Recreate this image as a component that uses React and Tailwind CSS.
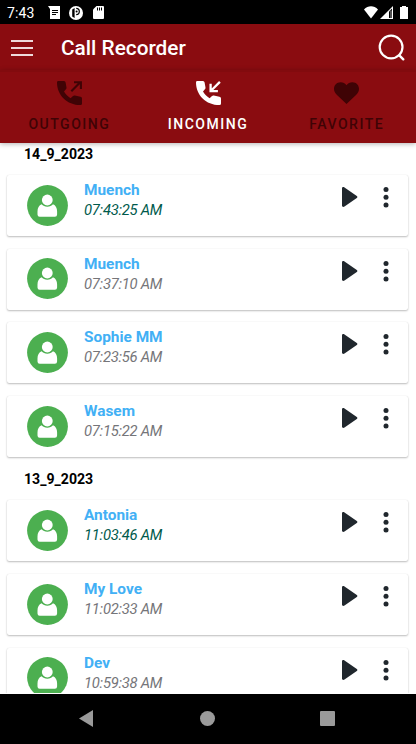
const groups = [
  {
    date: "14_9_2023",
    calls: [
      { name: "Muench", time: "07:43:25 AM", latest: true },
      { name: "Muench", time: "07:37:10 AM" },
      { name: "Sophie MM", time: "07:23:56 AM" },
      { name: "Wasem", time: "07:15:22 AM" },
    ],
  },
  {
    date: "13_9_2023",
    calls: [
      { name: "Antonia", time: "11:03:46 AM", latest: true },
      { name: "My Love", time: "11:02:33 AM" },
      { name: "Dev", time: "10:59:38 AM" },
    ],
  },
];

const HANDSET =
  "M1.3 0H7q1.3 0 1.6 1.5l.9 5q.2 1-.6 1.8L7 10.6c1.6 2.8 3.8 5 6.6 6.6l2.4-2.1q.8-.8 1.8-.6l5.6 1.3q1.6.3 1.6 1.7v5q0 1.5-1.5 1.5C10 24 0 14 0 1.4Q0 0 1.3 0z";

function StatusBar() {
  return (
    <div className="flex h-6 shrink-0 items-center bg-black text-white">
      <span className="ml-[7px] mt-[2px] w-[41px] text-[14px] leading-none tracking-[0.1px]">7:43</span>
      <svg className="mt-px h-[13px] w-[13px]" viewBox="0 0 13 13">
        <path fill="#fff" d="M0 0h12v13H2V3z" />
        <path stroke="#000" d="M4 4.5h6M4 6.5h6M4 8.5h4" />
      </svg>
      <svg className="ml-2 mt-px h-[14px] w-[14px]" viewBox="0 0 14 14">
        <circle cx="7" cy="7" r="7" fill="#fff" />
        <path fill="#000" d="M3.2 3.4 5.6 2v10L3.2 10.6z" />
        <path fill="none" stroke="#000" strokeWidth="1.2" d="M7.2 2.4a2.9 2.9 0 0 1 0 6.2" />
        <circle cx="7.6" cy="5.4" r="1" fill="#000" />
      </svg>
      <svg className="ml-[10px] mt-px h-[13px] w-[11px]" viewBox="0 0 11 13">
        <path fill="#fff" d="M3.5 0H10a1 1 0 0 1 1 1v11a1 1 0 0 1-1 1H1a1 1 0 0 1-1-1V3.5z" />
        <path stroke="#000" d="M4.5 1.5v3M6.5 1.5v3M8.5 1.5v3" />
      </svg>
      <svg className="ml-auto mt-px h-[13px] w-[14px]" viewBox="0 0 14 13">
        <path fill="#fff" d="M7 12.5 0 3.5C4-.9 10-.9 14 3.5z" />
      </svg>
      <svg className="ml-[2px] mt-px h-[13px] w-[13px]" viewBox="0 0 13 13">
        <path fill="#fff" d="M0 13 13 0v13z" />
        <path fill="#000" d="M9 5.5 12 2.5V12H9z" />
        <path fill="#aaa" d="M10.5 4.5h1V12h-1z" />
      </svg>
      <svg className="ml-[7px] mr-2 mt-px h-[13px] w-[8px]" viewBox="0 0 8 13">
        <path fill="#fff" d="M2 0h4v1h2v12H0V1h2z" />
      </svg>
    </div>
  );
}

function Toolbar() {
  return (
    <header className="flex h-[46px] shrink-0 items-center bg-[#8a0c10] text-white">
      <svg className="ml-[11px] mt-[2px] h-[18px] w-[22px]" viewBox="0 0 22 18">
        <path stroke="#fff" strokeOpacity=".85" strokeWidth="2" d="M0 2h22M0 9h22M0 16h22" />
      </svg>
      <h1 className="ml-7 mt-[3px] text-[20.8px] font-medium leading-none">Call Recorder</h1>
      <svg className="ml-auto mr-[11px] mt-px h-[27px] w-[27px]" viewBox="0 0 27 27" fill="none" stroke="#fff">
        <circle cx="13.1" cy="13" r="11.4" strokeWidth="2.2" />
        <path strokeWidth="2.4" strokeLinecap="round" d="m21.3 21.3 4 4" />
      </svg>
    </header>
  );
}

function Tab({ label, active, children }) {
  return (
    <button
      className={`flex flex-1 flex-col items-center ${active ? "text-white" : "text-[#3f0305]"}`}
    >
      <svg className="mt-[9px] h-[24px] w-[25px]" viewBox="0 0 25 24" fill="currentColor">
        {children}
      </svg>
      <span className="mt-[12px] text-[14px] font-medium leading-[14px] tracking-[1.5px]">{label}</span>
    </button>
  );
}

function Tabs() {
  return (
    <nav className="relative flex h-[73px] shrink-0 border-t-2 border-[#820b0e] bg-[#8a0c10] shadow-[0_1px_5px_rgba(0,0,0,0.3)]">
      <Tab label="OUTGOING">
        <path d={HANDSET} />
        <path fill="none" stroke="currentColor" strokeWidth="2.1" d="M14.3 10.2 23 1.5M17 1.2h6.9v6.9" />
      </Tab>
      <Tab label="INCOMING" active>
        <path d={HANDSET} />
        <path fill="none" stroke="currentColor" strokeWidth="2.3" d="M23.9.9 15 9.8M14.6 2.8v7.3h7.3" />
      </Tab>
      <Tab label="FAVORITE">
        <path d="M12.5 23 3 14C1 12 0 10.2 0 7.8 0 4 2.8 1.2 6.6 1.2c2.4 0 4.6 1.2 5.9 3 1.3-1.8 3.5-3 5.9-3C22.2 1.2 25 4 25 7.8c0 2.4-1 4.2-3 6.2z" />
      </Tab>
    </nav>
  );
}

function CallCard({ name, time, latest }) {
  return (
    <li className="flex h-[61px] shrink-0 rounded-[2px] bg-white shadow-[0_1px_2px_rgba(0,0,0,0.25),0_0_1px_rgba(0,0,0,0.12)]">
      <svg className="ml-5 mt-[9.5px] h-[41px] w-[41px]" viewBox="0 0 41 41">
        <circle cx="20.5" cy="20.5" r="20.4" fill="#4caf50" />
        <circle cx="20.3" cy="15" r="5.4" fill="#fff" />
        <path
          fill="#fff"
          d="M14.6 19.2c1.3 1.6 3.3 2.5 5.7 2.5s4.4-.9 5.7-2.5c2.6 1 4.1 3.8 4.1 7.4v3a2.2 2.2 0 0 1-2.2 2.2H12.7a2.2 2.2 0 0 1-2.2-2.2v-3c0-3.6 1.5-6.4 4.1-7.4z"
        />
      </svg>
      <div className="ml-4 mt-[5px] flex flex-col">
        <span className="text-[15.4px] font-bold leading-5 text-[#42b0f5]">{name}</span>
        <span
          className={`text-[14.8px] italic leading-5 tracking-[-0.26px] ${latest ? "text-[#005a4c]" : "text-[#757579]"}`}
        >
          {time}
        </span>
      </div>
      <svg className="ml-auto mt-3 h-5 w-4" viewBox="0 0 16 20">
        <path fill="#20272d" d="M0 1.2C0 .1 1.5-.3 2.5.4l12.3 8.7c.8.6.8 1.3 0 1.9L2.5 19.6c-1 .7-2.5.3-2.5-.8z" />
      </svg>
      <svg className="ml-[25px] mr-[19px] mt-3 h-[21px] w-[6px]" viewBox="0 0 6 21" fill="#20272d">
        <circle cx="3" cy="2.5" r="2.5" />
        <circle cx="3" cy="10.2" r="2.5" />
        <circle cx="3" cy="18" r="2.5" />
      </svg>
    </li>
  );
}

function NavBar() {
  return (
    <div className="flex h-[50px] shrink-0 items-center bg-black pb-px text-[#9a9a9a]">
      <svg className="ml-[79px] h-[17px] w-[14px]" viewBox="0 0 14 17" fill="currentColor">
        <path d="M14 0v17L0 8.5z" />
      </svg>
      <div className="ml-[107px] h-[15px] w-[15px] rounded-full bg-[#9a9a9a]" />
      <div className="ml-[105px] h-[15px] w-[15px] rounded-[1px] bg-[#9a9a9a]" />
    </div>
  );
}

export default function App() {
  return (
    <div className="flex h-[744px] w-[416px] flex-col overflow-hidden bg-white font-[Roboto,sans-serif]">
      <StatusBar />
      <Toolbar />
      <Tabs />
      <main className="mb-px min-h-0 flex-1 overflow-hidden">
        {groups.map((group, i) => (
          <section key={group.date} className={i > 0 ? "pt-[11.3px]" : ""}>
            <h2 className="h-[32px] pl-6 pt-[3px] text-[14.1px] font-bold leading-[16px] text-black">
              {group.date}
            </h2>
            <ul className="flex flex-col gap-[12.7px] pl-[7px] pr-2">
              {group.calls.map((call) => (
                <CallCard key={call.time} {...call} />
              ))}
            </ul>
          </section>
        ))}
      </main>
      <NavBar />
    </div>
  );
}
